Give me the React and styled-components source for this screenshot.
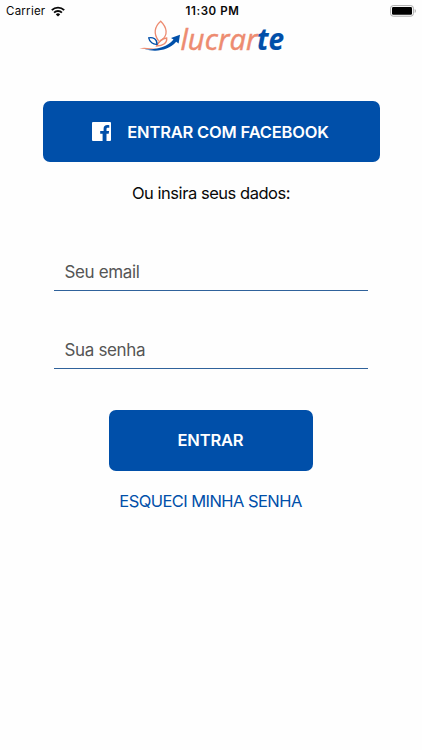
import React from "react";
import styled, { createGlobalStyle } from "styled-components";

const BLUE = "#004fa9";
const CORAL = "#ed8b70";

const GlobalStyle = createGlobalStyle`
  *, *::before, *::after { box-sizing: border-box; }
  body {
    margin: 0;
    background: #fefefe;
    font-family: Inter, "Liberation Sans", sans-serif;
  }
`;

const Screen = styled.div`
  display: flex;
  flex-direction: column;
  width: 422px;
  height: 750px;
  overflow: hidden;
  color: #080808;
`;

const StatusBar = styled.header`
  display: grid;
  grid-template-columns: 1fr auto 1fr;
  align-items: center;
  height: 20px;
  padding: 2px 5px 0 6px;
  font-size: 11.5px;
  line-height: 18px;
`;

const Carrier = styled.div`
  display: flex;
  align-items: center;
  gap: 6px;
  letter-spacing: 0.25px;
`;

const Clock = styled.time`
  padding-left: 2px;
  font-weight: 600;
  letter-spacing: 0.6px;
`;

const Battery = styled.svg`
  justify-self: end;
`;

const Logo = styled.svg`
  display: block;
  flex: none;
  margin: -10px 0 -10px 138px;
`;

const LogoText = styled.text`
  font-family: "Open Sans", "Noto Sans", sans-serif;
  font-style: italic;
  font-size: 30px;
  font-weight: ${(p) => (p.$bold ? 700 : 400)};
  fill: ${(p) => (p.$bold ? BLUE : CORAL)};
  stroke: ${(p) => (p.$bold ? BLUE : CORAL)};
  stroke-width: ${(p) => (p.$bold ? 0.2 : 0.45)}px;
`;

const LoginForm = styled.form`
  display: flex;
  flex-direction: column;
  align-items: center;
  margin-top: 45px;
`;

const Button = styled.button`
  display: flex;
  align-items: center;
  justify-content: center;
  gap: 16px;
  width: ${(p) => p.$width}px;
  height: 61px;
  padding: 0 1px ${(p) => p.$lift || 0}px 0;
  border: 0;
  border-radius: 7px;
  background: ${BLUE};
  color: #fff;
  font: 600 16.5px/20px Inter, "Liberation Sans", sans-serif;
  letter-spacing: -0.18px;
`;

const Hint = styled.p`
  margin: 20px 0 0;
  font-size: 16.5px;
  line-height: 22px;
  letter-spacing: -0.46px;
`;

const Fields = styled.div`
  display: flex;
  flex-direction: column;
  gap: 36px;
  width: 314px;
  margin: 45px 0 41px;
`;

const Field = styled.input`
  width: 100%;
  height: 42px;
  padding: 5px 11px 0 10.5px;
  border: 0;
  border-bottom: 1px solid #2f629b;
  border-radius: 0;
  outline: 0;
  background: transparent;
  font: 400 17px/22px Inter, "Liberation Sans", sans-serif;
  letter-spacing: -0.35px;

  &::placeholder {
    color: #555;
    opacity: 1;
  }
`;

const ForgotLink = styled.a`
  margin-top: 19px;
  padding-right: 1px;
  color: ${BLUE};
  font-size: 16.5px;
  line-height: 22px;
  letter-spacing: -0.56px;
`;

function WifiIcon() {
  return (
    <svg width="14" height="11" viewBox="0 0 14 11" fill="none" stroke="#080808" strokeWidth="1.9">
      <path d="M.8 4.1a8.9 8.9 0 0 1 12.4 0" />
      <path d="M3.1 6.6a5.6 5.6 0 0 1 7.8 0" />
      <path d="M7 10.6 4.8 8.4a3.1 3.1 0 0 1 4.4 0Z" fill="#080808" stroke="none" />
    </svg>
  );
}

function BatteryIcon() {
  return (
    <Battery width="27" height="12" viewBox="0 0 27 12">
      <rect x=".6" y=".6" width="22.8" height="10.6" rx="2.6" fill="#fff" stroke="#aaa" />
      <rect x="2" y="2" width="20" height="7.8" rx="1.2" fill="#000" />
      <path d="M24.7 4v4c1.6-.6 1.6-3.4 0-4Z" fill="#aaa" />
    </Battery>
  );
}

function FacebookIcon() {
  return (
    <svg width="19" height="19" viewBox="0 0 19 19">
      <path
        fill="#fff"
        d="M1 0h17a1 1 0 0 1 1 1v17a1 1 0 0 1-1 1h-3.500v-7.300h2.200l.4-2.800h-2.600V7.100c0-.9.4-1.400 1.500-1.400h1.300V3.200c-.5-.1-1.200-.2-2-.2-2.300 0-3.700 1.300-3.700 3.700v2.200H8.200v2.800h2.400V19H1a1 1 0 0 1-1-1V1a1 1 0 0 1 1-1Z"
      />
    </svg>
  );
}

function BrandLogo() {
  return (
    <Logo width="150" height="56" viewBox="138 10 150 56" role="img" aria-label="lucrarte">
      <g fill="none" stroke={CORAL} strokeWidth="1.3">
        <path d="M158.600 40.800C153.300 34 154.300 26.700 160.700 21.200C167.200 27.500 168.300 35 161.500 40.300C159.500 42 158 43 157 45" />
        <path d="M156.500 46C158.500 41.500 162 38.500 166.700 38C167.300 42.800 163.500 46 156.500 46Z" />
      </g>
      <path d="M157 44.300C153.200 44.700 149.500 42 148.700 37.800C153.200 36.700 157.200 39.500 157 44.300Z" fill="none" stroke={BLUE} strokeWidth="1.3" />
      <path d="M139.500 48.300C145 46.800 150 48.600 157 48.500C153 50.600 145.500 49 139.500 48.300Z" fill={CORAL} />
      <path d="M144.500 49.300C156 50 167 47.500 173.500 39.600L171 37.900L180 34.700L178.600 43.600L176.200 41.800C168.500 50.700 156 52.300 144.500 49.300Z" fill={BLUE} />
      <LogoText x="180.500" y="49.500" textLength="77" lengthAdjust="spacingAndGlyphs">lucrar</LogoText>
      <LogoText $bold x="257" y="49.500" textLength="27" lengthAdjust="spacingAndGlyphs">te</LogoText>
    </Logo>
  );
}

export default function App() {
  return (
    <>
      <GlobalStyle />
      <Screen>
        <StatusBar>
          <Carrier>Carrier <WifiIcon /></Carrier>
          <Clock>11:30 PM</Clock>
          <BatteryIcon />
        </StatusBar>
        <BrandLogo />
        <LoginForm>
          <Button type="button" $width={337}>
            <FacebookIcon />
            ENTRAR COM FACEBOOK
          </Button>
          <Hint>Ou insira seus dados:</Hint>
          <Fields>
            <Field type="email" placeholder="Seu email" />
            <Field type="password" placeholder="Sua senha" />
          </Fields>
          <Button type="submit" $width={204} $lift={2}>ENTRAR</Button>
          <ForgotLink>ESQUECI MINHA SENHA</ForgotLink>
        </LoginForm>
      </Screen>
    </>
  );
}
